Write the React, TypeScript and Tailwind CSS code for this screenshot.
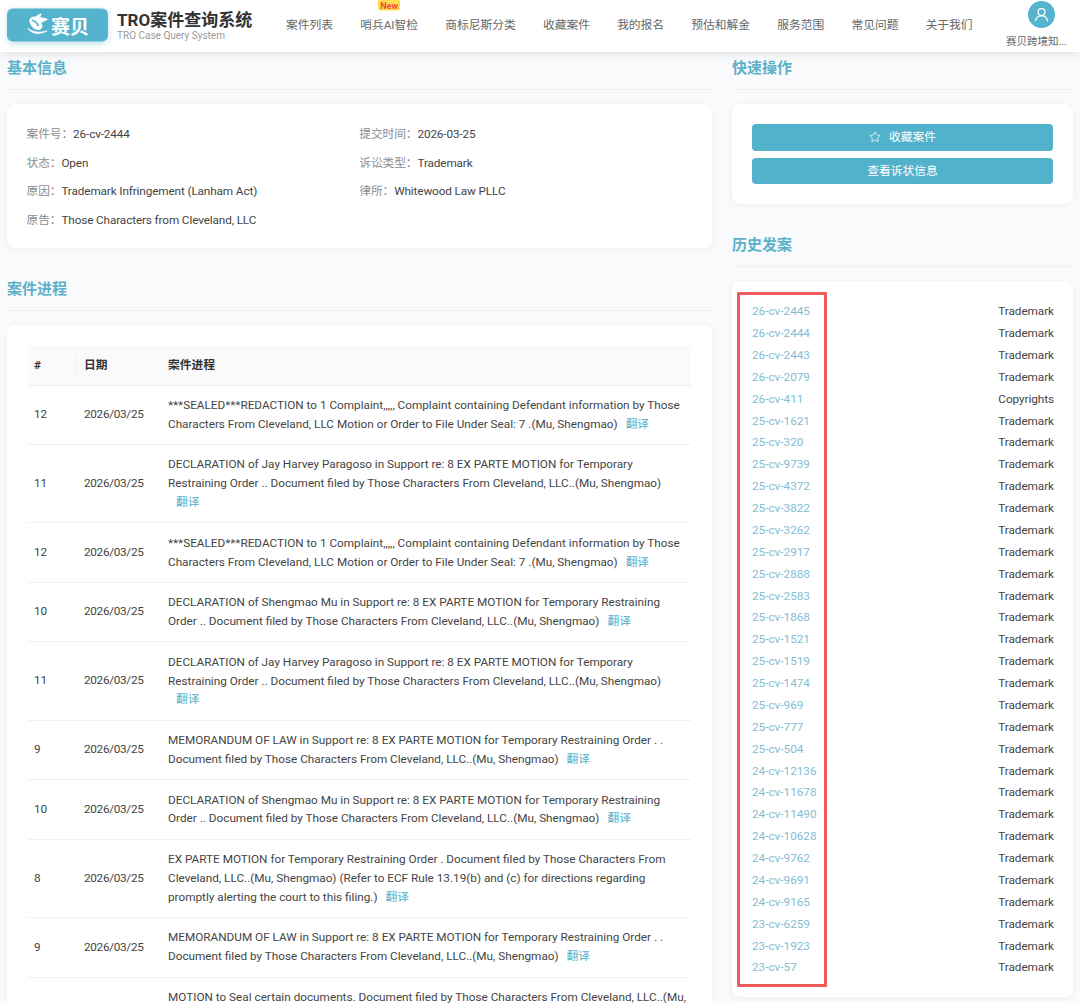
import { Star } from "lucide-react";

const font = { fontFamily: 'Roboto, "Noto Sans CJK SC", sans-serif' };

const nav = ["案件列表", "哨兵AI智检", "商标尼斯分类", "收藏案件", "我的报名", "预估和解金", "服务范围", "常见问题", "关于我们"];

const rowsA = [
  ["12", "***SEALED***REDACTION to 1 Complaint,,,,, Complaint containing Defendant information by Those Characters From Cleveland, LLC Motion or Order to File Under Seal: 7 .(Mu, Shengmao)"],
  ["11", "DECLARATION of Jay Harvey Paragoso in Support re: 8 EX PARTE MOTION for Temporary Restraining Order .. Document filed by Those Characters From Cleveland, LLC..(Mu, Shengmao)"],
  ["12", "***SEALED***REDACTION to 1 Complaint,,,,, Complaint containing Defendant information by Those Characters From Cleveland, LLC Motion or Order to File Under Seal: 7 .(Mu, Shengmao)"],
  ["10", "DECLARATION of Shengmao Mu in Support re: 8 EX PARTE MOTION for Temporary Restraining Order .. Document filed by Those Characters From Cleveland, LLC..(Mu, Shengmao)"],
  ["11", "DECLARATION of Jay Harvey Paragoso in Support re: 8 EX PARTE MOTION for Temporary Restraining Order .. Document filed by Those Characters From Cleveland, LLC..(Mu, Shengmao)"],
  ["9", "MEMORANDUM OF LAW in Support re: 8 EX PARTE MOTION for Temporary Restraining Order . . Document filed by Those Characters From Cleveland, LLC..(Mu, Shengmao)"],
  ["10", "DECLARATION of Shengmao Mu in Support re: 8 EX PARTE MOTION for Temporary Restraining Order .. Document filed by Those Characters From Cleveland, LLC..(Mu, Shengmao)"],
  ["8", "EX PARTE MOTION for Temporary Restraining Order . Document filed by Those Characters From Cleveland, LLC..(Mu, Shengmao) (Refer to ECF Rule 13.19(b) and (c) for directions regarding promptly alerting the court to this filing.)"],
  ["9", "MEMORANDUM OF LAW in Support re: 8 EX PARTE MOTION for Temporary Restraining Order . . Document filed by Those Characters From Cleveland, LLC..(Mu, Shengmao)"],
  ["7", "MOTION to Seal certain documents. Document filed by Those Characters From Cleveland, LLC..(Mu, Shengmao)"],
];

const history = [
  ["26-cv-2445", "Trademark"], ["26-cv-2444", "Trademark"], ["26-cv-2443", "Trademark"], ["26-cv-2079", "Trademark"],
  ["26-cv-411", "Copyrights"], ["25-cv-1621", "Trademark"], ["25-cv-320", "Trademark"], ["25-cv-9739", "Trademark"],
  ["25-cv-4372", "Trademark"], ["25-cv-3822", "Trademark"], ["25-cv-3262", "Trademark"], ["25-cv-2917", "Trademark"],
  ["25-cv-2888", "Trademark"], ["25-cv-2583", "Trademark"], ["25-cv-1868", "Trademark"], ["25-cv-1521", "Trademark"],
  ["25-cv-1519", "Trademark"], ["25-cv-1474", "Trademark"], ["25-cv-969", "Trademark"], ["25-cv-777", "Trademark"],
  ["25-cv-504", "Trademark"], ["24-cv-12136", "Trademark"], ["24-cv-11678", "Trademark"], ["24-cv-11490", "Trademark"],
  ["24-cv-10628", "Trademark"], ["24-cv-9762", "Trademark"], ["24-cv-9691", "Trademark"], ["24-cv-9165", "Trademark"],
  ["23-cv-6259", "Trademark"], ["23-cv-1923", "Trademark"], ["23-cv-57", "Trademark"],
];

function Heading({ children, top }: { children: string; top?: boolean }) {
  return (
    <h2 className={`${top ? "" : "mt-[30px]"} mb-[14px] border-b border-[#edf0f3] pt-[1px] pb-[11px] text-[15px] leading-[20px] font-bold text-[#5cb1ca]`}>
      {children}
    </h2>
  );
}

function Info({ label, value }: { label: string; value: string }) {
  return (
    <div className="leading-[18.5px] tracking-[-0.12px]">
      <span className="text-[#8c8c8c]">{label}：</span>
      <span className="text-[#444]">{value}</span>
    </div>
  );
}

function LogoMark() {
  return (
    <svg width="24" height="24" viewBox="0 0 24 24" fill="none" className="shrink-0">
      <path d="M3 8C4 5 7 3.500 10 4 11 2.500 13.500 1 16 1 15 2.500 14.500 3.500 14.500 5 17 5 20 5.500 22 7 20 8.500 17 9 15 10.500 17 12 17 15.500 14.500 17 10 19 5 15 3 8Z" fill="#fff" />
      <path d="M6.500 8C8.500 8.500 11 10 12 13" stroke="#55b3cd" strokeWidth="1.800" strokeLinecap="round" />
      <path d="M2 16C6 21.500 13 22.500 21 18.500 14 20.500 7.500 20 2 16Z" fill="#fff" stroke="#fff" strokeWidth="0.800" />
    </svg>
  );
}

export default function App() {
  return (
    <div style={font} className="h-[1003px] w-[1080px] overflow-hidden bg-[#f8fafc] text-[11.75px] text-[#444]">
      <header className="relative z-10 flex h-[52px] items-center bg-white pl-[7px] shadow-[0_2px_8px_rgba(0,0,0,0.1)]">
        <div className="flex h-[33px] w-[101px] -translate-y-[1.5px] items-center justify-center gap-[1px] rounded-[6px] bg-[#55b3cd] shadow-[0_2px_6px_rgba(85,179,205,0.35)]">
          <LogoMark />
          <span className="text-[19px] leading-none font-bold text-white" style={{ fontFamily: '"Noto Sans CJK SC", sans-serif' }}>赛贝</span>
        </div>
        <div className="ml-[9px] w-[135px]">
          <div className="text-[17px] leading-[20px] font-bold whitespace-nowrap text-[#333]">TRO案件查询系统</div>
          <div className="text-[10px] leading-[12px] whitespace-nowrap text-[#9a9a9a]">TRO Case Query System</div>
        </div>
        <nav className="ml-[34px] flex -translate-y-[0.5px] gap-[27.2px] text-[#666]">
          {nav.map((n) => (
            <div key={n} className="relative whitespace-nowrap">
              {n}
              {n.startsWith("哨兵") && (
                <span className="absolute top-[-17px] left-[18px] rounded-[2px] bg-[#ffdc50] px-[2px] pt-[1px] text-[9px] leading-[10px] font-bold text-[#ef4b3c]">
                  New
                </span>
              )}
            </div>
          ))}
        </nav>
        <div className="absolute top-[1px] left-[1006px] w-[74px]">
          <div className="ml-[21.5px] flex h-[27px] w-[27px] items-center justify-center rounded-full bg-[#55b3cd]">
            <svg width="15" height="15" viewBox="0 0 24 24" fill="none" stroke="#fff" strokeWidth="2" strokeLinecap="round">
              <circle cx="12" cy="8" r="5.500" />
              <path d="M2.500 22c.8-5 4.500-8 9.500-8s8.700 3 9.500 8" />
            </svg>
          </div>
          <div className="mt-[5.5px] text-[10.5px] leading-[15px] whitespace-nowrap text-[#666]">赛贝跨境知...</div>
        </div>
      </header>

      <main className="flex items-start pt-[5px] pl-[7px]">
        <div className="w-[705px]">
          <Heading top>基本信息</Heading>
          <section className="grid grid-cols-2 gap-y-[10px] rounded-[8px] bg-white pt-[21px] pr-[20px] pb-[19px] pl-[19.5px] shadow-[0_1px_6px_rgba(0,0,0,0.05)]">
            <Info label="案件号" value="26-cv-2444" />
            <Info label="提交时间" value="2026-03-25" />
            <Info label="状态" value="Open" />
            <Info label="诉讼类型" value="Trademark" />
            <Info label="原因" value="Trademark Infringement (Lanham Act)" />
            <Info label="律所" value="Whitewood Law PLLC" />
            <Info label="原告" value="Those Characters from Cleveland, LLC" />
          </section>

          <Heading>案件进程</Heading>
          <section className="rounded-[8px] bg-white px-[21px] pt-[21px] shadow-[0_1px_6px_rgba(0,0,0,0.05)]">
            <table className="w-full table-fixed border-collapse text-left">
              <thead>
                <tr className="h-[39px] border-b border-[#f0f0f0] bg-[#fafafa] font-bold text-[#333]">
                  <th className="relative w-[50px] pt-[1px] pl-[6px] font-bold">
                    #
                    <span className="absolute top-[10px] right-[1px] h-[19px] w-px bg-[#f0f0f0]" />
                  </th>
                  <th className="w-[90px] pt-[1px] pl-[6px] font-bold">日期</th>
                  <th className="pt-[1px] pl-[0px] font-bold">案件进程</th>
                </tr>
              </thead>
              <tbody>
                {rowsA.map((r, i) => (
                  <tr key={i} className="border-b border-[#f0f0f0]">
                    <td className={`pl-[6px] align-middle ${i === 9 ? "pt-[30px]" : ""}`}>{r[0]}</td>
                    <td className={`pl-[6px] align-middle tracking-[-0.3px] ${i === 9 ? "pt-[30px]" : ""}`}>2026/03/25</td>
                    <td className="py-[10.400px] pr-[4px] leading-[18.860px]">
                      {r[1]}
                      <span className="ml-[8px] inline-block text-[#55b3cd]">翻译</span>
                    </td>
                  </tr>
                ))}
              </tbody>
            </table>
          </section>
        </div>

        <div className="ml-[20px] w-[341px]">
          <Heading top>快速操作</Heading>
          <section className="rounded-[8px] bg-white p-[20px] shadow-[0_1px_6px_rgba(0,0,0,0.05)]">
            <button className="flex h-[26.500px] w-full items-center justify-center gap-[8px] rounded-[4px] bg-[#52b2cb] pt-[2px] text-white">
              <Star size={12} strokeWidth={1.5} className="-mt-[2px]" />
              <span>收藏案件</span>
            </button>
            <button className="mt-[7px] flex h-[26.500px] w-full items-center justify-center rounded-[4px] bg-[#52b2cb] pt-[2px] text-white">
              查看诉状信息
            </button>
          </section>

          <Heading>历史发案</Heading>
          <section className="relative rounded-[8px] bg-white pt-[20px] pr-[19px] pb-[18px] pl-[20px] shadow-[0_1px_6px_rgba(0,0,0,0.05)]">
            {history.map(([c, t]) => (
              <div key={c} className="flex h-[21.880px] items-center justify-between">
                <span className="text-[#84bdd2]">{c}</span>
                <span className="tracking-[-0.06px] text-[#444]">{t}</span>
              </div>
            ))}
            <div className="absolute top-[11px] left-[5px] h-[695px] w-[90px] rounded-[1px] border-[3px] border-[#ef5a5a]" />
          </section>
        </div>
      </main>
    </div>
  );
}
